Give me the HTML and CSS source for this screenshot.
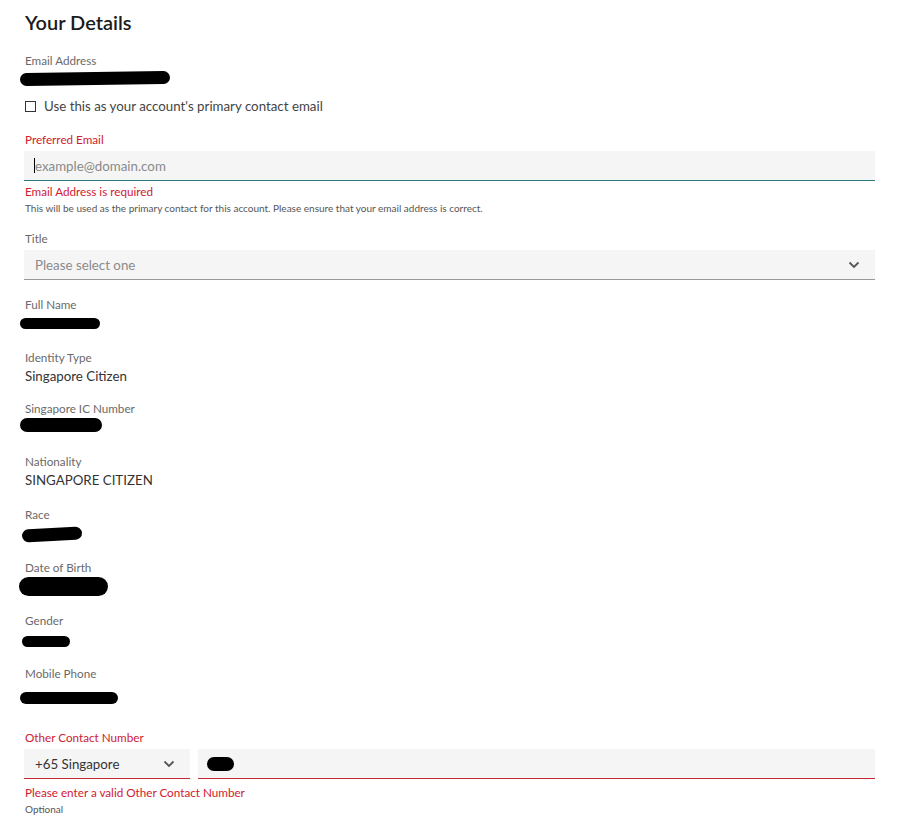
FILE: index.html
```html
<!DOCTYPE html>
<html lang="en">
<head>
    <meta charset="UTF-8">
    <meta name="viewport" content="width=device-width, initial-scale=1.0">
    <title>Your Details</title>
    <link rel="stylesheet" href="styles.css">
</head>
<body>

    <div class="wrap">

        <h2 class="pageTitle">Your Details</h2>

        <!-- email -->
        <div class="field">
            <div class="label">Email Address</div>
            <div class="value"><span class="redact r-email"></span></div>
        </div>

        <label class="check">
            <span class="box"></span>
            <span>Use this as your account's primary contact email</span>
        </label>

        <div class="field error">
            <div class="label">Preferred Email</div>
            <div class="input focus">
                <span class="caret"></span>
                <span class="placeholder">example@domain.com</span>
            </div>
            <div class="errMsg">Email Address is required</div>
            <div class="hint">This will be used as the primary contact for this account. Please ensure that your email address is correct.</div>
        </div>

        <!-- title -->
        <div class="field selectField">
            <div class="label">Title</div>
            <div class="input select">
                <span class="placeholder">Please select one</span>
                <svg class="chev" width="12" height="8" viewBox="0 0 12 8"><path d="M1.5 1.5 L6 6 L10.5 1.5" fill="none" stroke="#555" stroke-width="1.8"/></svg>
            </div>
        </div>

        <!-- read only -->
        <div class="field">
            <div class="label">Full Name</div>
            <div class="value"><span class="redact r-name"></span></div>
        </div>

        <div class="field short">
            <div class="label">Identity Type</div>
            <div class="value">Singapore Citizen</div>
        </div>

        <div class="field">
            <div class="label">Singapore IC Number</div>
            <div class="value"><span class="redact r-ic"></span></div>
        </div>

        <div class="field">
            <div class="label">Nationality</div>
            <div class="value">SINGAPORE CITIZEN</div>
        </div>

        <div class="field">
            <div class="label">Race</div>
            <div class="value"><span class="redact r-race"></span></div>
        </div>

        <div class="field">
            <div class="label">Date of Birth</div>
            <div class="value"><span class="redact r-dob"></span></div>
        </div>

        <div class="field">
            <div class="label">Gender</div>
            <div class="value"><span class="redact r-gender"></span></div>
        </div>

        <div class="field">
            <div class="label">Mobile Phone</div>
            <div class="value"><span class="redact r-mobile"></span></div>
        </div>

        <!-- other contact -->
        <div class="field error phone">
            <div class="label">Other Contact Number</div>
            <div class="phoneRow">
                <div class="input select country">
                    <span>+65 Singapore</span>
                    <svg class="chev" width="12" height="8" viewBox="0 0 12 8"><path d="M1.5 1.5 L6 6 L10.5 1.5" fill="none" stroke="#555" stroke-width="1.8"/></svg>
                </div>
                <div class="input number">
                    <span class="redact r-phone"></span>
                </div>
            </div>
            <div class="errMsg">Please enter a valid Other Contact Number</div>
            <div class="hint">Optional</div>
        </div>

    </div>

</body>
</html>
```

FILE: styles.css
```css
body{
    margin: 0;
    font-family: Lato, "Open Sans", "Liberation Sans", sans-serif;
    color: #333;
    background: #fff;
}

.wrap{
    width: 851px;
    padding: 10px 0 0 24px;
}

.pageTitle{
    margin: 0 0 18px 1px;
    font-size: 20px;
    line-height: 24px;
    font-weight: 600;
    color: #1b1b1b;
}

.field{
    margin-bottom: 17px;
}

.field.short{
    margin-bottom: 15px;
}

.label{
    font-size: 11.7px;
    line-height: 16px;
    color: #6a6a6a;
    margin: 0 0 2px 1px;
}

.value{
    display: flow-root;
    font-size: 13.3px;
    line-height: 18px;
    height: 18px;
    color: #333;
    margin-left: 1px;
}

.redact{
    display: block;
    height: 13px;
    background: #000;
    border-radius: 7px;
}

.r-email{ width: 150px; margin: 2px 0 0 -5px; transform: rotate(-0.8deg); }
.r-name{ width: 80px; height: 11px; margin: 4px 0 0 -5px; }
.r-ic{ width: 82px; height: 14px; margin: 0 0 0 -5px; }
.r-race{ width: 60px; margin: 4px 0 0 -3px; transform: rotate(-3deg); }
.r-dob{ width: 89px; height: 19px; margin: 0 0 0 -6px; border-radius: 10px; }
.r-gender{ width: 48px; height: 11px; margin: 6px 0 0 -3px; }
.r-mobile{ width: 98px; height: 12px; margin: 9px 0 0 -5px; }

.check{
    display: flex;
    align-items: center;
    gap: 8px;
    margin: -8px 0 16px 1px;
    font-size: 13.3px;
    line-height: 18px;
    color: #444;
}

.box{
    width: 9px;
    height: 9px;
    border: 1px solid #333;
}

.field .label + .input,
.field .label + .phoneRow{
    margin-top: 4px;
}

.input{
    display: flex;
    align-items: center;
    height: 29px;
    padding: 0 11px;
    background: #f5f5f5;
    border-bottom: 1px solid #999;
    font-size: 13.3px;
    color: #444;
}

.input.focus{
    border-bottom-color: #2b7a80;
    padding-left: 10px;
}

.placeholder{
    color: #8a8a8a;
}

.caret{
    width: 1px;
    height: 15px;
    background: #000;
}

.select{
    justify-content: space-between;
}

.chev{
    margin-right: 4px;
}

.selectField{
    margin-bottom: 16px;
}

.field.error{
    margin-bottom: 15px;
}

.field.error .label{
    color: #d0202f;
}

.errMsg{
    margin: 2px 0 0 1px;
    font-size: 11.7px;
    line-height: 16px;
    color: #d0202f;
}

.phone .errMsg{
    margin-top: 5px;
}

.hint{
    margin: 3px 0 0 1px;
    font-size: 10px;
    line-height: 13px;
    color: #555;
}

.error .input{
    border-bottom-color: #c42a34;
}

.error .input.focus{
    border-bottom-color: #2b7a80;
}

.field.phone{
    margin-top: 28px;
}

.phoneRow{
    display: flex;
    gap: 8px;
}

.country{
    width: 144px;
    color: #333;
}

.number{
    flex: 1;
}

.r-phone{
    width: 27px;
    height: 14px;
    margin: 0 0 0 -2px;
    border-radius: 7px;
}
```
